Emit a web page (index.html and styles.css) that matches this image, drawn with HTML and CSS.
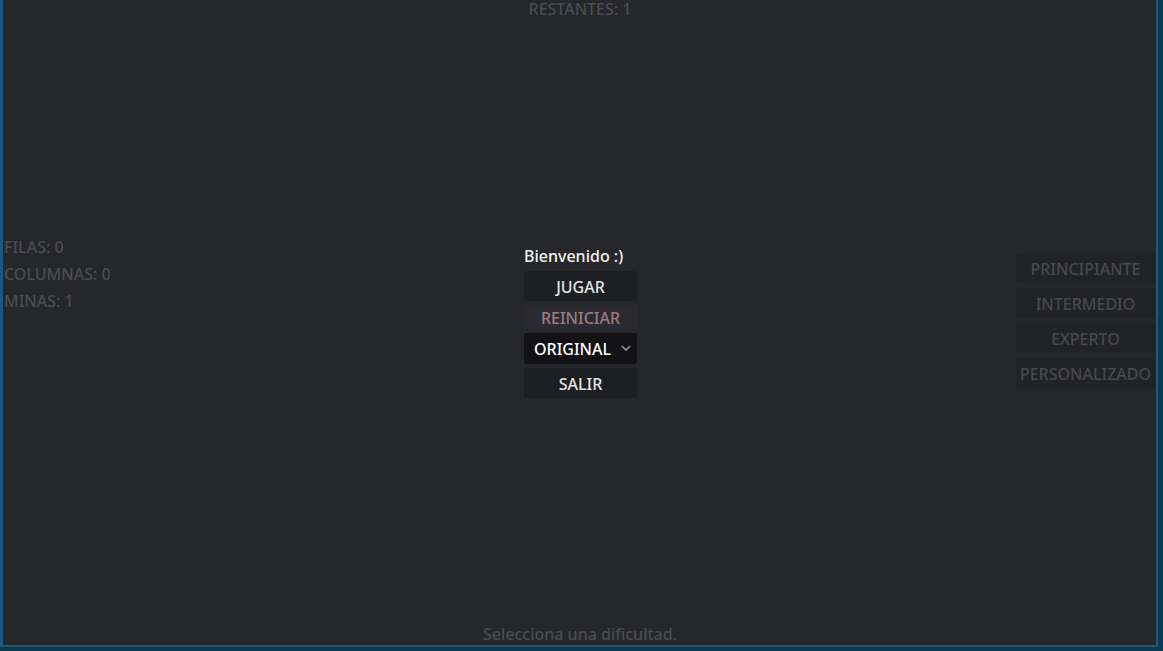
FILE: index.html
```html
<!DOCTYPE html>
<html lang="es">
<head>
<meta charset="utf-8">
<title>Buscaminas</title>
<link rel="stylesheet" href="styles.css">
</head>
<body>
<div class="frame">
  <header class="top">RESTANTES: 1</header>
  <main class="middle">
    <section class="stats">
      <div class="stat">FILAS: 0</div>
      <div class="stat">COLUMNAS: 0</div>
      <div class="stat">MINAS: 1</div>
    </section>
    <section class="menu">
      <div class="welcome">Bienvenido :)</div>
      <button class="btn">JUGAR</button>
      <button class="btn btn-disabled">REINICIAR</button>
      <div class="select">
        <span>ORIGINAL</span>
        <svg class="chev" width="10" height="6" viewBox="0 0 10 6"><path d="M1 1 L5 5 L9 1" fill="none" stroke="#9a9a9e" stroke-width="1.6"/></svg>
      </div>
      <button class="btn">SALIR</button>
    </section>
    <section class="levels">
      <div class="level">PRINCIPIANTE</div>
      <div class="level">INTERMEDIO</div>
      <div class="level">EXPERTO</div>
      <div class="level">PERSONALIZADO</div>
    </section>
  </main>
  <footer class="bottom">Selecciona una dificultad.</footer>
</div>
</body>
</html>
```
FILE: styles.css
```css
html, body {
  margin: 0;
  padding: 0;
  height: 100%;
}
body {
  background: #0e3a4b;
  font-family: "Noto Sans", "Open Sans", sans-serif;
  font-size: 16px;
  font-weight: 500;
  overflow: hidden;
}
.frame {
  width: 1153px;
  height: 645px;
  background: #26272b;
  border-left: 3px solid #175a7c;
  border-right: 2px solid #175a7c;
  border-bottom: 2px solid #175a7c;
  display: grid;
  grid-template-rows: 19px 1fr 22px;
}
.top {
  text-align: center;
  color: #4b4c50;
  line-height: 19px;
  padding-left: 1px;
}
.bottom {
  text-align: center;
  color: #4b4c50;
  line-height: 22px;
  padding-left: 1px;
}
.middle {
  display: grid;
  grid-template-columns: 1fr 113px 1fr;
  align-items: center;
}
.stats {
  align-self: start;
  margin-top: 215px;
  padding-left: 1px;
  display: flex;
  flex-direction: column;
}
.stat {
  color: #4b4c50;
  line-height: 27px;
}
.menu {
  display: flex;
  flex-direction: column;
  margin-left: 1px;
  margin-right: -1px;
  margin-top: 3px;
}
.welcome {
  color: #f2f2f2;
  line-height: 18px;
  margin-bottom: 6px;
}
.btn {
  font: inherit;
  height: 30px;
  border: none;
  border-radius: 3px;
  background: #1e1f22;
  color: #e4e4e4;
  padding: 2px 0 0;
  display: flex;
  align-items: center;
  justify-content: center;
}
.btn-disabled {
  height: 24px;
  margin: 4px 0;
  border-radius: 0;
  background: #2c2a31;
  color: #9c7b80;
}
.select {
  height: 31px;
  background: #121215;
  border-radius: 3px;
  color: #ffffff;
  display: flex;
  align-items: center;
  justify-content: space-between;
  padding: 0 6px 0 10px;
  margin-bottom: 4px;
}
.chev {
  margin-top: -2px;
}
.levels {
  justify-self: end;
  width: 139px;
  margin-right: 1px;
  display: flex;
  flex-direction: column;
  gap: 5px;
  margin-top: -1px;
}
.level {
  height: 30px;
  padding-top: 2px;
  box-sizing: border-box;
  background: #222326;
  border-radius: 3px;
  color: #48494d;
  display: flex;
  align-items: center;
  justify-content: center;
}
```
